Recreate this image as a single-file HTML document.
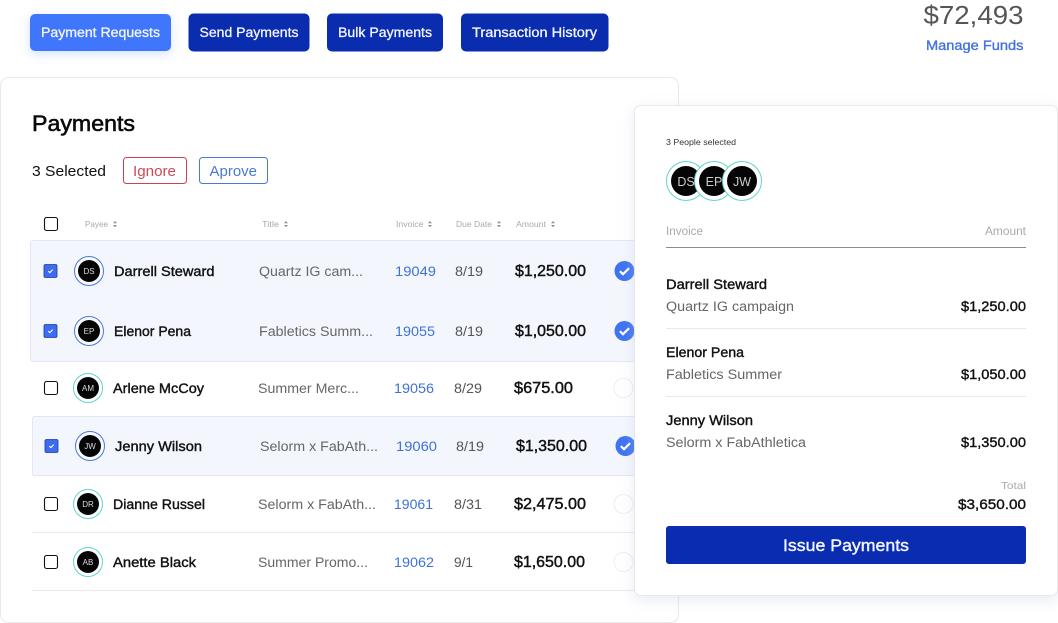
<!DOCTYPE html>
<html><head><meta charset="utf-8"><style>
html,body{margin:0;padding:0;background:#fff;width:1058px;height:623px;overflow:hidden}
svg{display:block}
text{font-family:"Liberation Sans",sans-serif}
.hd{font-size:8.500px;fill:#aaa}
.nm{font-size:13.500px;fill:#111;stroke:#111;stroke-width:.38px}
.ti{font-size:13.500px;fill:#666}
.inv{font-size:13.500px;fill:#3f71d6}
.dt{font-size:13.500px;fill:#555}
.am{font-size:15.500px;fill:#111;stroke:#111;stroke-width:.45px}
.av{font-size:8px;fill:#ddd;text-anchor:middle}
.btn{font-size:13.500px;fill:#f4f6ff;stroke:#f4f6ff;stroke-width:.3px}
.pa{font-size:13.500px;fill:#111;stroke:#111;stroke-width:.38px}
.pt{font-size:13.500px;fill:#666}
.srt{fill:#8f8f8f}
</style></head><body>
<svg width="1058" height="623" viewBox="0 0 1058 623" xmlns="http://www.w3.org/2000/svg">
<defs>
<filter id="s1" x="-20%" y="-40%" width="140%" height="200%"><feDropShadow dx="0" dy="3" stdDeviation="5" flood-color="#3e75f9" flood-opacity=".22"/></filter>
<filter id="s2" x="-10%" y="-10%" width="120%" height="120%"><feDropShadow dx="0" dy="4" stdDeviation="7" flood-color="#b8c4dc" flood-opacity=".35"/></filter>
<g id="srt"><path class="srt" d="M0 2.800L2 .5L4 2.800ZM0 4.500L2 6.800L4 4.500Z"/></g>
<g id="cb"><rect x="0.500" y="0.500" width="13" height="13" rx="2" fill="#fff" stroke="#111" stroke-width="1.100"/></g>
<g id="cc"><rect x="0.500" y="0.500" width="13" height="13" rx="1.500" fill="#3e6cf0" stroke="#1d3a9c" stroke-width="0.800"/><path d="M4.800 7.200L6.400 8.600L9.200 5.600" fill="none" stroke="#fff" stroke-width="1.100"/></g>
<g id="ok"><circle r="10" fill="#3e73f2"/><path d="M-4.600 .2L-1.500 3.200L4.600-2.800" fill="none" stroke="#fff" stroke-width="2.200"/></g>
</defs>

<rect x="30" y="14" width="141" height="37" rx="5" fill="#3f76fb" filter="url(#s1)"/>
<text x="41" y="37" class="btn" textLength="119" lengthAdjust="spacingAndGlyphs">Payment Requests</text>
<rect x="188.500" y="13.500" width="121" height="38" rx="5" fill="#0a2cae"/>
<text x="199.500" y="37" class="btn" textLength="99" lengthAdjust="spacingAndGlyphs">Send Payments</text>
<rect x="327" y="13.500" width="116" height="38" rx="5" fill="#0a2cae"/>
<text x="338" y="37" class="btn" textLength="94" lengthAdjust="spacingAndGlyphs">Bulk Payments</text>
<rect x="461" y="13.500" width="147.500" height="38" rx="5" fill="#0a2cae"/>
<text x="472" y="37" class="btn" textLength="125" lengthAdjust="spacingAndGlyphs">Transaction History</text>

<text x="923.500" y="24" font-size="26" fill="#555" textLength="100" lengthAdjust="spacingAndGlyphs">$72,493</text>
<text x="926" y="50" font-size="13.500" fill="#4273db" stroke="#4273db" stroke-width=".35" textLength="97.500" lengthAdjust="spacingAndGlyphs">Manage Funds</text>

<rect x="0.500" y="77.500" width="678" height="545" rx="8" fill="#fff" stroke="#e9e9ec"/>
<text x="32" y="131" font-size="22.500" fill="#0b0b0b" stroke="#0b0b0b" stroke-width=".6" textLength="103" lengthAdjust="spacingAndGlyphs">Payments</text>
<text x="32" y="176" font-size="14.500" fill="#111" textLength="74" lengthAdjust="spacingAndGlyphs">3 Selected</text>
<rect x="123.500" y="157.500" width="63" height="26" rx="3" fill="#fff" stroke="#c9434f"/>
<text x="133" y="176" font-size="14.500" fill="#cc4a55" textLength="43" lengthAdjust="spacingAndGlyphs">Ignore</text>
<rect x="199.500" y="157.500" width="68" height="26" rx="3" fill="#fff" stroke="#4a78d6"/>
<text x="209.500" y="176" font-size="14.500" fill="#4a78d6" textLength="47.500" lengthAdjust="spacingAndGlyphs">Aprove</text>

<use href="#cb" x="44" y="217"/>
<text x="85" y="227" class="hd" textLength="23" lengthAdjust="spacingAndGlyphs">Payee</text><use href="#srt" x="113" y="220.500"/>
<text x="262" y="227" class="hd" textLength="17" lengthAdjust="spacingAndGlyphs">Title</text><use href="#srt" x="284" y="220.500"/>
<text x="396" y="227" class="hd" textLength="27.500" lengthAdjust="spacingAndGlyphs">Invoice</text><use href="#srt" x="428" y="220.500"/>
<text x="456" y="227" class="hd" textLength="36" lengthAdjust="spacingAndGlyphs">Due Date</text><use href="#srt" x="497" y="220.500"/>
<text x="516" y="227" class="hd" textLength="30" lengthAdjust="spacingAndGlyphs">Amount</text><use href="#srt" x="551" y="220.500"/>

<rect x="30.500" y="240.500" width="620" height="121" rx="3" fill="#f4f6fd" stroke="#e3e7f1"/>
<rect x="32.500" y="416.500" width="620" height="59" rx="2" fill="#f4f6fd" stroke="#e3e7f1"/>
<line x1="32" y1="532.500" x2="640" y2="532.500" stroke="#e9e9ec"/>
<line x1="32" y1="590.500" x2="640" y2="590.500" stroke="#e9e9ec"/>

<use href="#cc" x="43.500" y="264"/>
<circle cx="89" cy="271" r="14.500" fill="#f8f9ff" stroke="#4a78d6"/><circle cx="89" cy="271" r="11" fill="#050505"/><text x="89" y="274" class="av">DS</text>
<text x="114" y="276" class="nm" textLength="100.500" lengthAdjust="spacingAndGlyphs">Darrell Steward</text>
<text x="259" y="276" class="ti" textLength="104" lengthAdjust="spacingAndGlyphs">Quartz IG cam...</text>
<text x="395" y="276" class="inv" textLength="41" lengthAdjust="spacingAndGlyphs">19049</text>
<text x="455" y="276" class="dt" textLength="28" lengthAdjust="spacingAndGlyphs">8/19</text>
<text x="515" y="276" class="am" textLength="71" lengthAdjust="spacingAndGlyphs">$1,250.00</text>
<use href="#ok" x="624.500" y="271"/>

<use href="#cc" x="43.500" y="324"/>
<circle cx="89" cy="331" r="14.500" fill="#f8f9ff" stroke="#4a78d6"/><circle cx="89" cy="331" r="11" fill="#050505"/><text x="89" y="334" class="av">EP</text>
<text x="114" y="336" class="nm" textLength="77" lengthAdjust="spacingAndGlyphs">Elenor Pena</text>
<text x="259" y="336" class="ti" textLength="114" lengthAdjust="spacingAndGlyphs">Fabletics Summ...</text>
<text x="395" y="336" class="inv" textLength="40" lengthAdjust="spacingAndGlyphs">19055</text>
<text x="455" y="336" class="dt" textLength="28" lengthAdjust="spacingAndGlyphs">8/19</text>
<text x="515" y="336" class="am" textLength="71" lengthAdjust="spacingAndGlyphs">$1,050.00</text>
<use href="#ok" x="624.500" y="331"/>

<use href="#cb" x="44" y="381"/>
<circle cx="88" cy="388" r="14.500" fill="#fff" stroke="#5fd6cb"/><circle cx="88" cy="388" r="11" fill="#050505"/><text x="88" y="391" class="av">AM</text>
<text x="113" y="393" class="nm" textLength="91" lengthAdjust="spacingAndGlyphs">Arlene McCoy</text>
<text x="258" y="393" class="ti" textLength="101" lengthAdjust="spacingAndGlyphs">Summer Merc...</text>
<text x="394" y="393" class="inv" textLength="40" lengthAdjust="spacingAndGlyphs">19056</text>
<text x="454" y="393" class="dt" textLength="28" lengthAdjust="spacingAndGlyphs">8/29</text>
<text x="514" y="393" class="am" textLength="59" lengthAdjust="spacingAndGlyphs">$675.00</text>
<circle cx="623.500" cy="388" r="9.500" fill="#fff" stroke="#eee"/>

<use href="#cc" x="44.500" y="439"/>
<circle cx="90" cy="446" r="14.500" fill="#f8f9ff" stroke="#4a78d6"/><circle cx="90" cy="446" r="11" fill="#050505"/><text x="90" y="449" class="av">JW</text>
<text x="115" y="451" class="nm" textLength="87" lengthAdjust="spacingAndGlyphs">Jenny Wilson</text>
<text x="260" y="451" class="ti" textLength="118" lengthAdjust="spacingAndGlyphs">Selorm x FabAth...</text>
<text x="396" y="451" class="inv" textLength="41" lengthAdjust="spacingAndGlyphs">19060</text>
<text x="456" y="451" class="dt" textLength="28" lengthAdjust="spacingAndGlyphs">8/19</text>
<text x="516" y="451" class="am" textLength="71" lengthAdjust="spacingAndGlyphs">$1,350.00</text>
<use href="#ok" x="625.500" y="446"/>

<use href="#cb" x="44" y="497"/>
<circle cx="88" cy="504" r="14.500" fill="#fff" stroke="#5fd6cb"/><circle cx="88" cy="504" r="11" fill="#050505"/><text x="88" y="507" class="av">DR</text>
<text x="113" y="509" class="nm" textLength="92" lengthAdjust="spacingAndGlyphs">Dianne Russel</text>
<text x="258" y="509" class="ti" textLength="118" lengthAdjust="spacingAndGlyphs">Selorm x FabAth...</text>
<text x="394" y="509" class="inv" textLength="39" lengthAdjust="spacingAndGlyphs">19061</text>
<text x="454" y="509" class="dt" textLength="28" lengthAdjust="spacingAndGlyphs">8/31</text>
<text x="514" y="509" class="am" textLength="72" lengthAdjust="spacingAndGlyphs">$2,475.00</text>
<circle cx="623.500" cy="504" r="9.500" fill="#fff" stroke="#eee"/>

<use href="#cb" x="44" y="555"/>
<circle cx="88" cy="562" r="14.500" fill="#fff" stroke="#5fd6cb"/><circle cx="88" cy="562" r="11" fill="#050505"/><text x="88" y="565" class="av">AB</text>
<text x="113" y="567" class="nm" textLength="83" lengthAdjust="spacingAndGlyphs">Anette Black</text>
<text x="258" y="567" class="ti" textLength="110" lengthAdjust="spacingAndGlyphs">Summer Promo...</text>
<text x="394" y="567" class="inv" textLength="40" lengthAdjust="spacingAndGlyphs">19062</text>
<text x="454" y="567" class="dt" textLength="19" lengthAdjust="spacingAndGlyphs">9/1</text>
<text x="514" y="567" class="am" textLength="71" lengthAdjust="spacingAndGlyphs">$1,650.00</text>
<circle cx="623.500" cy="562" r="9.500" fill="#fff" stroke="#eee"/>

<rect x="634.500" y="105.500" width="423" height="490" rx="6" fill="#fff" stroke="#e9e9ec" filter="url(#s2)"/>
<text x="666" y="145" font-size="8.500" fill="#333" textLength="70" lengthAdjust="spacingAndGlyphs">3 People selected</text>
<circle cx="686" cy="181" r="19.500" fill="#fff" stroke="#5fd6cb"/><circle cx="686" cy="181" r="15" fill="#050505"/><text x="686" y="186" font-size="12.500" fill="#ccc" text-anchor="middle">DS</text>
<circle cx="714" cy="181" r="19.500" fill="#fff" stroke="#5fd6cb"/><circle cx="714" cy="181" r="15" fill="#050505"/><text x="714" y="186" font-size="12.500" fill="#ccc" text-anchor="middle">EP</text>
<circle cx="742" cy="181" r="19.500" fill="#fff" stroke="#5fd6cb"/><circle cx="742" cy="181" r="15" fill="#050505"/><text x="742" y="186" font-size="12.500" fill="#ccc" text-anchor="middle">JW</text>
<text x="666" y="235" font-size="11.500" fill="#aaa" textLength="37" lengthAdjust="spacingAndGlyphs">Invoice</text>
<text x="985" y="235" font-size="11.500" fill="#aaa" textLength="41" lengthAdjust="spacingAndGlyphs">Amount</text>
<line x1="666" y1="247.500" x2="1026" y2="247.500" stroke="#8c8c8c"/>

<text x="666" y="289" class="pa" textLength="101" lengthAdjust="spacingAndGlyphs">Darrell Steward</text>
<text x="666" y="311" class="pt" textLength="128" lengthAdjust="spacingAndGlyphs">Quartz IG campaign</text>
<text x="961" y="311" class="pa" textLength="65" lengthAdjust="spacingAndGlyphs">$1,250.00</text>
<line x1="666" y1="328.500" x2="1026" y2="328.500" stroke="#e9e9ec"/>
<text x="666" y="357" class="pa" textLength="78" lengthAdjust="spacingAndGlyphs">Elenor Pena</text>
<text x="666" y="379" class="pt" textLength="116" lengthAdjust="spacingAndGlyphs">Fabletics Summer</text>
<text x="961" y="379" class="pa" textLength="65" lengthAdjust="spacingAndGlyphs">$1,050.00</text>
<line x1="666" y1="396.500" x2="1026" y2="396.500" stroke="#e9e9ec"/>
<text x="666" y="425" class="pa" textLength="87" lengthAdjust="spacingAndGlyphs">Jenny Wilson</text>
<text x="666" y="447" class="pt" textLength="140" lengthAdjust="spacingAndGlyphs">Selorm x FabAthletica</text>
<text x="961" y="447" class="pa" textLength="65" lengthAdjust="spacingAndGlyphs">$1,350.00</text>
<text x="1001" y="489" font-size="10.500" fill="#aaa" textLength="25" lengthAdjust="spacingAndGlyphs">Total</text>
<text x="958" y="509" class="pa" textLength="68" lengthAdjust="spacingAndGlyphs">$3,650.00</text>
<rect x="666" y="526" width="360" height="38" rx="3" fill="#0a2cb0"/>
<text x="783" y="551" font-size="16.500" fill="#f4f6ff" stroke="#f4f6ff" stroke-width=".4" textLength="126" lengthAdjust="spacingAndGlyphs">Issue Payments</text>
</svg>
</body></html>
